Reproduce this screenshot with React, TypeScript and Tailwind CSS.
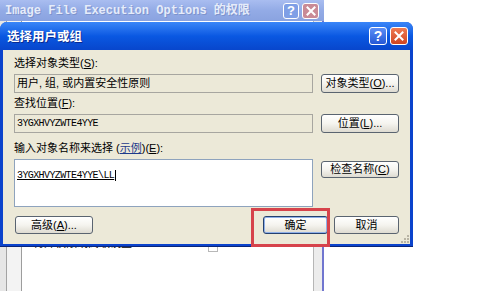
import React from 'react';

interface BtnProps {
    children: React.ReactNode;
    className?: string;
    isDefault?: boolean;
}

// XP style push button
const Btn: React.FC<BtnProps> = ({ children, className = '', isDefault = false }) => (
    <div
        className={`flex items-center justify-center rounded-[3px] border text-[11px] leading-none text-black bg-gradient-to-b from-white via-[#f5f4ef] to-[#dedbd1] ${isDefault
            ? 'border-[#24406f] shadow-[inset_0_0_0_1px_#8fb0e8]'
            : 'border-[#5a6470]'
            } ${className}`}
    >
        {children}
    </div>
);

const Mn: React.FC<{ k: string }> = ({ k }) => (
    <span>
        (<span className="underline">{k}</span>)
    </span>
);

const HelpBtn: React.FC<{ inactive?: boolean; size: string }> = ({ inactive, size }) => (
    <div
        className={`${size} flex items-center justify-center rounded-[3px] border border-white font-['Liberation_Sans',sans-serif] font-bold text-white ${inactive ? 'bg-[#7f9fe6] text-[13px]' : 'bg-gradient-to-b from-[#5c8ef6] to-[#2457d6] text-[14px]'
            }`}
    >
        ?
    </div>
);

const CloseBtn: React.FC<{ inactive?: boolean; size: string }> = ({ inactive, size }) => (
    <div
        className={`${size} flex items-center justify-center rounded-[3px] border border-white ${inactive ? 'bg-[#c98a96]' : 'bg-gradient-to-b from-[#ef7a52] to-[#cf4420]'
            }`}
    >
        <svg width="10" height="10" viewBox="0 0 10 10">
            <path d="M1.5 1.5 L8.5 8.5 M8.5 1.5 L1.5 8.5" stroke="white" strokeWidth="2" strokeLinecap="square" />
        </svg>
    </div>
);

const mono = "font-['Liberation_Mono',monospace] text-[10px] tracking-[-0.6px]";

export default function App() {
    return (
        <div className="relative w-[500px] h-[291px] overflow-hidden bg-white font-['Liberation_Sans','Noto_Sans_CJK_SC',sans-serif]">
            {/* background window: Image File Execution Options permissions */}
            <div className="absolute left-0 top-0 w-[324px] h-[291px] flex flex-col">
                <div className="h-[21px] flex items-center pl-[5px] pr-[5px] bg-gradient-to-b from-[#a9bdf0] via-[#93abe6] to-[#8aa3e0]">
                    <span className="flex-1 font-['Liberation_Mono','Noto_Sans_CJK_SC',monospace] font-bold text-[12px] text-[#e6ecfa] [text-shadow:1px_1px_0_#7d93cc] whitespace-nowrap">
                        Image File Execution Options 的权限
                    </span>
                    <div className="flex gap-[3px]">
                        <HelpBtn inactive size="w-[16px] h-[16px]" />
                        <CloseBtn inactive size="w-[17px] h-[16px]" />
                    </div>
                </div>
                <div className="flex-1 flex">
                    <div className="w-[7px] bg-[#e6e6e6] border-r border-[#a3a3a3]" />
                    <div className="w-[15px] bg-[#f3f3f3] border-r border-[#9d9d9d]" />
                    <div className="flex-1 flex items-start pt-[216px] pl-[11px]">
                        <span className="w-[175px] text-[11px] leading-[12px] text-black">特殊权限或高级设置</span>
                        <div className="mt-[5px] w-[10px] h-[10px] border border-[#b8b8b8] bg-white" />
                    </div>
                    <div className="w-[9px] bg-[#ececec] border-l border-[#b6b6b6]" />
                    <div className="w-[2px] bg-[#7076cf]" />
                </div>
            </div>

            {/* dialog: 选择用户或组 */}
            <div className="absolute left-0 top-[22px] w-[413px] h-[225px] flex flex-col rounded-t-[7px] bg-[#0b43cc] border-b border-[#0a2577]">
                <div className="h-[28px] flex items-center pl-[7px] pr-[5px] rounded-t-[7px] bg-gradient-to-b from-[#3a86f8] via-[#0a58e2] to-[#0846cc]">
                    <span className="flex-1 text-[12.5px] font-bold text-white [text-shadow:1px_1px_0_#0a2a90] font-['Noto_Sans_CJK_SC',sans-serif]">
                        选择用户或组
                    </span>
                    <div className="flex gap-[3px]">
                        <HelpBtn size="w-[18px] h-[18px]" />
                        <CloseBtn size="w-[18px] h-[18px]" />
                    </div>
                </div>

                <div className="relative flex-1 mx-[3px] mb-[2px] bg-[#ece9d8] px-[11px] pt-[6px] flex flex-col text-[11px] text-black">
                    <div className="h-[14px] leading-[14px]">
                        选择对象类型<Mn k="S" />:
                    </div>
                    <div className="mt-[4px] h-[19px] flex justify-between">
                        <div className="w-[299px] h-[19px] border border-[#a7a6a0] bg-[#ece9d8] flex items-center pl-[2px] leading-none">
                            用户, 组, 或内置安全性原则
                        </div>
                        <Btn className="w-[78px] h-[19px]">
                            对象类型<Mn k="O" />...
                        </Btn>
                    </div>

                    <div className="mt-[3px] h-[14px] leading-[14px]">
                        查找位置<Mn k="F" />:
                    </div>
                    <div className="mt-[4px] h-[19px] flex justify-between">
                        <div className={`w-[299px] h-[19px] border border-[#a7a6a0] bg-[#ece9d8] flex items-center pl-[2px] ${mono}`}>
                            3YGXHVYZWTE4YYE
                        </div>
                        <Btn className="w-[78px] h-[19px]">
                            位置<Mn k="L" />...
                        </Btn>
                    </div>

                    <div className="mt-[8px] h-[14px] leading-[14px]">
                        输入对象名称来选择 (<span className="underline text-[#1d3a8a]">示例</span>)<Mn k="E" />:
                    </div>
                    <div className="mt-[4px] flex justify-between items-start">
                        <div className="w-[299px] h-[48px] border border-[#8ea3bd] bg-white pt-[6px] pl-[2px]">
                            <span className={`underline border-r border-black pr-[1px] ${mono}`}>3YGXHVYZWTE4YYE\LL</span>
                        </div>
                        <Btn className="mt-[2px] w-[78px] h-[17px]">
                            检查名称<Mn k="C" />
                        </Btn>
                    </div>

                    <div className="mt-[9px] flex items-center gap-[6px]">
                        <Btn className="ml-[1px] w-[78px] h-[18px]">
                            高级<Mn k="A" />...
                        </Btn>
                        <div className="flex-1" />
                        <Btn isDefault className="w-[65px] h-[18px]">确定</Btn>
                        <Btn className="w-[65px] h-[18px]">取消</Btn>
                    </div>

                    {/* resize grip */}
                    <svg className="absolute right-[1px] bottom-[1px]" width="10" height="10" viewBox="0 0 10 10">
                        {[
                            [8, 2], [8, 5], [5, 5], [8, 8], [5, 8], [2, 8],
                        ].map(([x, y]) => (
                            <rect key={`${x}-${y}`} x={x} y={y} width="2" height="2" fill="#b8b4a4" />
                        ))}
                    </svg>
                </div>
            </div>

            {/* red highlight around 确定 */}
            <div className="absolute left-[251px] top-[208px] w-[79px] h-[39px] border-[3px] border-[#d6434b]" />
        </div>
    );
}
